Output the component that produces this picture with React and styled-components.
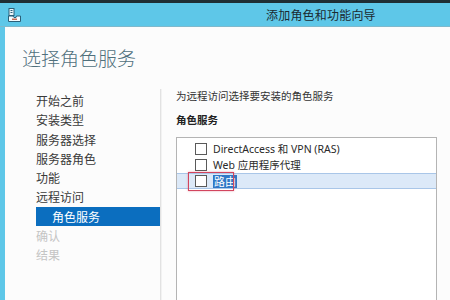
import React from "react";
import styled, { createGlobalStyle } from "styled-components";

const GlobalStyle = createGlobalStyle`
  html, body {
    margin: 0;
    padding: 0;
    width: 450px;
    height: 300px;
    overflow: hidden;
    background: #5ec7e8;
  }
  body {
    font-family: "Noto Sans CJK SC", "Liberation Sans", sans-serif;
  }
`;

const Window = styled.div`
  display: flex;
  flex-direction: column;
  width: 450px;
  height: 300px;
  border-top: 3px solid #1f2e34;
  box-sizing: border-box;
  background: #5ec7e8;
`;

const TitleBar = styled.div`
  display: flex;
  align-items: center;
  height: 23px;
  padding-left: 8px;
  border-bottom: 1px solid #7fb9cc;
  flex-shrink: 0;
`;

const Title = styled.div`
  margin-left: 245px;
  font-size: 12px;
  color: #1b2a30;
  letter-spacing: 0.2px;
`;

const Body = styled.div`
  flex: 1;
  margin-left: 5px;
  background: #fcfcfc;
  display: flex;
  flex-direction: column;
  min-height: 0;
`;

const Heading = styled.h1`
  margin: 0;
  padding: 18px 0 0 17px;
  font-size: 19px;
  line-height: 26px;
  font-weight: 300;
  color: #50707c;
`;

const Main = styled.div`
  flex: 1;
  display: flex;
  margin-top: 18px;
  min-height: 0;
`;

const Nav = styled.div`
  width: 155px;
  padding: 2px 0 0 31px;
  box-sizing: border-box;
  display: flex;
  flex-direction: column;
`;

const NavItem = styled.div`
  height: 19.25px;
  line-height: 19px;
  font-size: 12px;
  color: ${({ $disabled, $active }) =>
    $active ? "#ffffff" : $disabled ? "#c4c4c4" : "#3a3a3a"};
  background: ${({ $active }) => ($active ? "#0b6ebf" : "transparent")};
  padding-left: ${({ $active }) => ($active ? "16px" : "0")};
  margin-right: ${({ $active }) => ($active ? "-2px" : "0")};
`;

const Content = styled.div`
  flex: 1;
  border-left: 1px solid #e2e2e2;
  box-shadow: inset 1px 0 0 #f2f2f2;
  padding: 0 13px 0 15px;
  display: flex;
  flex-direction: column;
  min-height: 0;
`;

const Intro = styled.div`
  font-size: 10.5px;
  line-height: 14px;
  color: #333;
`;

const SectionLabel = styled.div`
  margin-top: 10px;
  font-size: 10.5px;
  line-height: 14px;
  font-weight: 700;
  color: #222;
`;

const ListBox = styled.div`
  margin-top: 10px;
  flex: 1;
  border: 1px solid #b4b4b4;
  border-bottom: none;
  background: #fff;
  padding-top: 3px;
  display: flex;
  flex-direction: column;
`;

const Row = styled.div`
  position: relative;
  display: flex;
  align-items: center;
  box-sizing: border-box;
  height: 16px;
  padding-left: 18px;
  color: #222;
  background: ${({ $selected }) => ($selected ? "#dce9f8" : "transparent")};
  border-top: 1px solid ${({ $selected }) => ($selected ? "#a9c6e8" : "transparent")};
  border-bottom: 1px solid ${({ $selected }) => ($selected ? "#a9c6e8" : "transparent")};
`;

const Check = styled.span`
  width: 10px;
  height: 10px;
  border: 1px solid #5a5a5a;
  background: #fff;
  margin-right: 6px;
  flex-shrink: 0;
`;

const RowText = styled.span`
  font-family: "Noto Sans", "Noto Sans CJK SC", sans-serif;
  font-size: 10.5px;
  line-height: 14px;
  color: #2a2a2a;
`;

const Marked = styled.span`
  background: #2f78c6;
  color: #fff;
  font-size: 11px;
  line-height: 13px;
  padding: 0 1px;
`;

const FocusRing = styled.span`
  position: absolute;
  left: 11px;
  top: -2px;
  width: 44px;
  height: 17px;
  border: 1px solid #d2455e;
  box-shadow: 0 0 2px rgba(210, 69, 94, 0.5);
  pointer-events: none;
`;

const AppIcon = () => (
  <svg width="13" height="14" viewBox="0 0 13 14">
    <rect x="1" y="0.5" width="5" height="7" fill="#eaf6fb" stroke="#2b5f78" strokeWidth="1" />
    <line x1="2.5" y1="2.5" x2="4.5" y2="2.5" stroke="#2b5f78" />
    <line x1="2.5" y1="4.5" x2="4.5" y2="4.5" stroke="#2b5f78" />
    <path d="M0.5 8 L5 8 L6 9.5 L8 9.5 L8.5 8 L12.5 8 L12.5 13.5 L0.5 13.5 Z" fill="#f4fbfe" stroke="#2b5f78" strokeWidth="1" />
    <rect x="4" y="10.5" width="5" height="1.5" fill="#c46a55" />
  </svg>
);

const steps = [
  { label: "开始之前" },
  { label: "安装类型" },
  { label: "服务器选择" },
  { label: "服务器角色" },
  { label: "功能" },
  { label: "远程访问" },
  { label: "角色服务", active: true },
  { label: "确认", disabled: true },
  { label: "结果", disabled: true },
];

const App = () => {
  return (
    <>
      <GlobalStyle />
      <Window>
        <TitleBar>
          <AppIcon />
          <Title>添加角色和功能向导</Title>
        </TitleBar>
        <Body>
          <Heading>选择角色服务</Heading>
          <Main>
            <Nav>
              {steps.map((s) => (
                <NavItem key={s.label} $active={s.active} $disabled={s.disabled}>
                  {s.label}
                </NavItem>
              ))}
            </Nav>
            <Content>
              <Intro>为远程访问选择要安装的角色服务</Intro>
              <SectionLabel>角色服务</SectionLabel>
              <ListBox>
                <Row>
                  <Check />
                  <RowText>DirectAccess 和 VPN (RAS)</RowText>
                </Row>
                <Row>
                  <Check />
                  <RowText>Web 应用程序代理</RowText>
                </Row>
                <Row $selected>
                  <Check />
                  <Marked>路由</Marked>
                  <FocusRing />
                </Row>
              </ListBox>
            </Content>
          </Main>
        </Body>
      </Window>
    </>
  );
};

export default App;
